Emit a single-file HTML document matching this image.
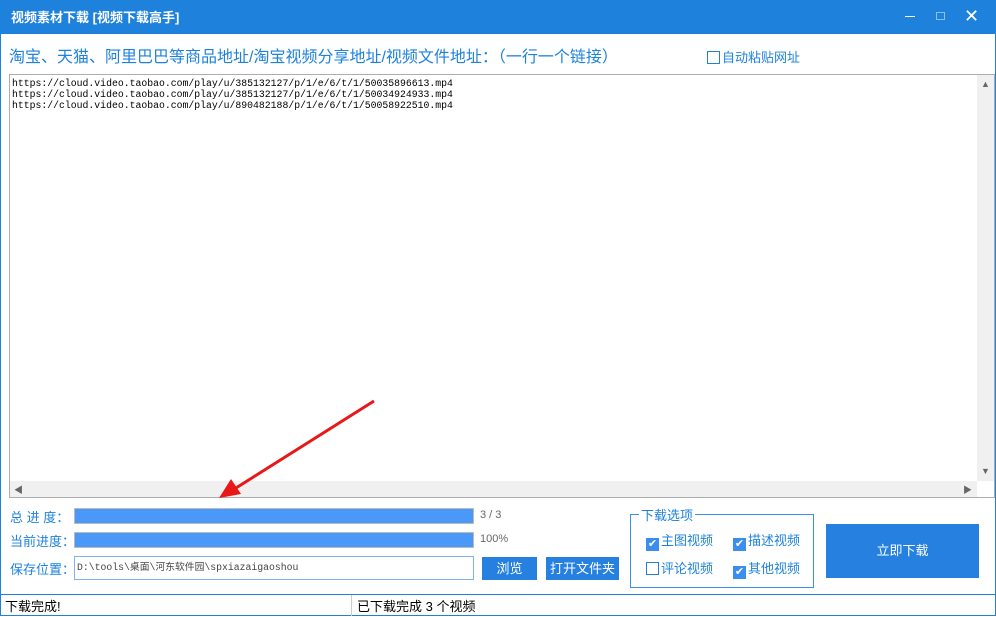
<!DOCTYPE html><html><head><meta charset="utf-8"><style>
*{margin:0;padding:0;box-sizing:border-box}
body{width:996px;height:616px;position:relative;background:#fff;font-family:"Liberation Sans","Noto Sans CJK SC",sans-serif;overflow:hidden;border:1px solid #1e82dc}
.a{position:absolute}
.t{font-size:13px;color:#1e82dc}
.mono{font-family:"Liberation Mono","Noto Sans CJK SC",monospace;font-size:9.8px;line-height:11px;color:#000}
.cb{display:inline-block;width:13px;height:13px;vertical-align:-2px;margin-right:2px}
.on{background:#3b8ef0;color:#fff;font-size:11px;line-height:13px;text-align:center}
.off{border:1px solid #1e82dc}
</style></head><body>
<div class="a" style="left:0;top:0;width:996px;height:33px;background:#1e82dc"></div>
<div class="a" style="left:10px;top:6px;color:#fff;font-size:13px;font-weight:bold">视频素材下载 [视频下载高手]</div>
<div class="a" style="left:904px;top:15px;width:10px;height:1px;background:#fff"></div>
<div class="a" style="left:935px;top:11px;width:9px;height:8px;border:1px solid #8ebfee"></div>
<div class="a" style="left:963px;top:5px;color:#fff;font-size:18px">✕</div>
<div class="a" style="left:8px;top:42px;font-size:16px;color:#1e82dc">淘宝、天猫、阿里巴巴等商品地址/淘宝视频分享地址/视频文件地址：（一行一个链接）</div>
<div class="a t" style="left:706px;top:46px"><span class="cb off"></span>自动粘贴网址</div>
<div class="a" style="left:8px;top:73px;width:986px;height:424px;border:1px solid #adadad"></div>
<div class="a mono" style="left:11px;top:77px">https://cloud.video.taobao.com/play/u/385132127/p/1/e/6/t/1/50035896613.mp4<br>https://cloud.video.taobao.com/play/u/385132127/p/1/e/6/t/1/50034924933.mp4<br>https://cloud.video.taobao.com/play/u/890482188/p/1/e/6/t/1/50058922510.mp4</div>
<div class="a" style="left:976px;top:74px;width:17px;height:406px;background:#f0f0f0"></div>
<div class="a" style="left:9px;top:480px;width:967px;height:16px;background:#f0f0f0"></div>
<div class="a" style="left:980px;top:78px;font-size:9px;color:#666">▲</div>
<div class="a" style="left:980px;top:465px;font-size:9px;color:#666">▼</div>
<div class="a" style="left:13px;top:482px;font-size:9px;color:#666">◀</div>
<div class="a" style="left:962px;top:482px;font-size:9px;color:#666">▶</div>
<svg class="a" style="left:0;top:0" width="996" height="616"><line x1="373" y1="400" x2="235" y2="487" stroke="#e81818" stroke-width="3"/><polygon points="218,497 230,478 240,493" fill="#e81818"/></svg>
<div class="a t" style="left:9px;top:506px">总 进 度：</div>
<div class="a t" style="left:9px;top:530px">当前进度：</div>
<div class="a t" style="left:9px;top:558px">保存位置：</div>
<div class="a" style="left:73px;top:507px;width:400px;height:16px;background:#4a98f8;border:1px solid #bbb"></div>
<div class="a" style="left:73px;top:531px;width:400px;height:16px;background:#4a98f8;border:1px solid #bbb"></div>
<div class="a" style="left:479px;top:508px;font-size:11px;color:#666">3 / 3</div>
<div class="a" style="left:479px;top:532px;font-size:11px;color:#666">100%</div>
<div class="a" style="left:73px;top:555px;width:400px;height:24px;border:1px solid #7fb4ea"></div>
<div class="a mono" style="left:76px;top:561px;color:#444">D:\tools\桌面\河东软件园\spxiazaigaoshou</div>
<div class="a" style="left:481px;top:556px;width:55px;height:23px;background:#2580e0;color:#fff;font-size:13px;text-align:center;line-height:23px">浏览</div>
<div class="a" style="left:545px;top:556px;width:73px;height:23px;background:#2580e0;color:#fff;font-size:13px;text-align:center;line-height:23px">打开文件夹</div>
<div class="a" style="left:629px;top:513px;width:184px;height:74px;border:1px solid #3b8ef0"></div>
<div class="a t" style="left:638px;top:504px;background:#fff;padding:0 2px">下载选项</div>
<div class="a t" style="left:645px;top:529px"><span class="cb on">✔</span>主图视频</div>
<div class="a t" style="left:732px;top:529px"><span class="cb on">✔</span>描述视频</div>
<div class="a t" style="left:645px;top:557px"><span class="cb off"></span>评论视频</div>
<div class="a t" style="left:732px;top:557px"><span class="cb on">✔</span>其他视频</div>
<div class="a" style="left:825px;top:523px;width:153px;height:54px;background:#2580e0;color:#fff;font-size:13px;text-align:center;line-height:54px">立即下载</div>
<div class="a" style="left:0;top:593px;width:996px;height:1px;background:#1e82dc"></div>
<div class="a" style="left:350px;top:594px;width:1px;height:21px;background:#ccc"></div>
<div class="a" style="left:4px;top:595px;font-size:13px">下载完成!</div>
<div class="a" style="left:356px;top:595px;font-size:13px">已下载完成 3 个视频</div>
</body></html>
